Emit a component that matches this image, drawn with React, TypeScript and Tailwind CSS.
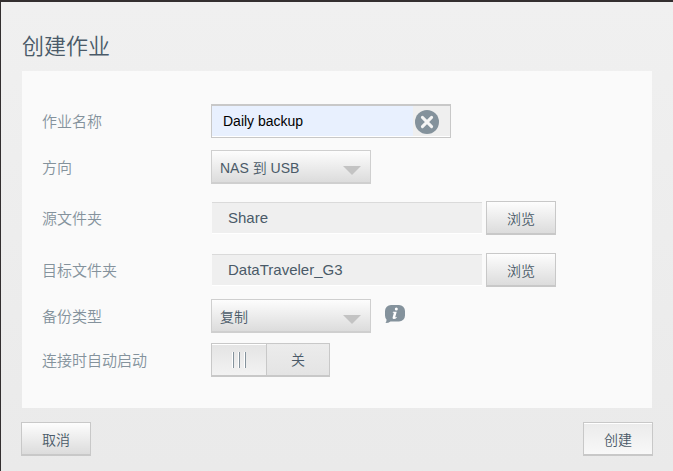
import { useState, type ReactNode } from "react";

interface RowProps {
  id: string;
  label: string;
  className?: string;
  children: ReactNode;
}

const buttonBase =
  "h-[34px] w-[70px] shrink-0 border border-b-2 border-[#c8c8c8] pt-0.5 text-sm text-[#4a5a68]";
const buttonGray = `${buttonBase} bg-linear-to-b from-[#fdfdfd] to-[#dcdcdc]`;
const buttonLight = `${buttonBase} bg-linear-to-b from-[#ebebeb] to-[#f8f8f8] shadow-[inset_0_1px_0_#fff]`;

function Row({ id, label, className = "", children }: RowProps) {
  return (
    <div className={`flex items-center ${className}`}>
      <label htmlFor={id} className="w-[169px] shrink-0 pt-0.5 text-[15px] leading-5 text-[#84929c]">
        {label}
      </label>
      {children}
    </div>
  );
}

function Select({ id, options }: { id: string; options: string[] }) {
  return (
    <div className="relative w-40">
      <select
        id={id}
        className="block h-[34px] w-full appearance-none border border-b-2 border-[#cfcfcf] bg-linear-to-b from-[#fdfdfd] to-[#dcdcdc] pl-2 pr-8 pt-0.5 text-sm text-[#4a5a68] outline-none"
      >
        {options.map((option) => (
          <option key={option}>{option}</option>
        ))}
      </select>
      <svg
        viewBox="0 0 18 9"
        className="pointer-events-none absolute right-[10px] top-4 h-[9px] w-[18px]"
        aria-hidden="true"
      >
        <path d="M0 0h18L9 9z" fill="#c3c3c3" />
      </svg>
    </div>
  );
}

function FolderPicker({ id, value }: { id: string; value: string }) {
  return (
    <div className="flex items-center gap-1">
      <input
        id={id}
        readOnly
        value={value}
        className="ml-px h-8 w-[270px] min-w-0 border-b border-t border-b-white border-t-[#dadada] bg-[#efefef] px-4 pb-0.5 text-[15px] text-[#4a5a68] outline-none"
      />
      <button type="button" className={buttonGray}>
        浏览
      </button>
    </div>
  );
}

export default function App() {
  const [name, setName] = useState("Daily backup");
  const [auto, setAuto] = useState(false);

  return (
    <div className="min-h-screen border-l border-t-2 border-[#332f30] bg-linear-to-b from-[#f0f0f0] to-[#eaeaea] font-['Liberation_Sans','Noto_Sans_CJK_SC',sans-serif] font-[350]">
      <form
        className="px-[21px] pb-3.5 pt-[29px]"
        onSubmit={(e) => e.preventDefault()}
      >
        <h1 className="text-[22px] leading-8 text-[#4a5a68]">创建作业</h1>

        {/* Settings */}
        <div className="mt-2 bg-[#fafafa] px-5 pb-[31px] pt-[33px]">
          <Row id="name" label="作业名称">
            <div className="flex h-[34px] w-60 border border-t-2 border-[#c8c8c8] bg-[#efefef] shadow-[inset_0_-1px_0_#fff]">
              <input
                id="name"
                value={name}
                onChange={(e) => setName(e.target.value)}
                className="mb-px w-[201px] min-w-0 bg-[#e8f0fe] pl-[11px] text-sm text-black outline-none"
              />
              <button type="button" aria-label="清除" className="ml-0.5" onClick={() => setName("")}>
                <svg viewBox="0 0 24 24" className="size-6">
                  <circle cx="12" cy="12" r="12" fill="#84929c" />
                  <path
                    d="M7.4 7.4l9.2 9.2M16.6 7.4l-9.2 9.2"
                    stroke="#f5f5f5"
                    strokeWidth="3"
                    strokeLinecap="round"
                  />
                </svg>
              </button>
            </div>
          </Row>

          <Row id="direction" label="方向" className="mt-3">
            <Select id="direction" options={["NAS 到 USB", "USB 到 NAS"]} />
          </Row>

          <Row id="source" label="源文件夹" className="mt-[17px]">
            <FolderPicker id="source" value="Share" />
          </Row>

          <Row id="target" label="目标文件夹" className="mt-[18px]">
            <FolderPicker id="target" value="DataTraveler_G3" />
          </Row>

          <Row id="type" label="备份类型" className="mt-3">
            <Select id="type" options={["复制", "同步"]} />
            <button type="button" aria-label="说明" className="-mt-1 ml-3.5">
              <svg viewBox="0 0 20 18" className="h-[18px] w-5">
                <path
                  d="M6 0h8a6 6 0 0 1 6 6v4.500a6 6 0 0 1-6 6H5.500Q3.500 18 .5 18Q1.700 16.500 1.500 14.500A6 6 0 0 1 0 10.500V6a6 6 0 0 1 6-6z"
                  fill="#84929c"
                />
                <circle cx="11.300" cy="3.900" r="1.500" fill="#fff" />
                <path
                  d="M8 6.700h3.700L10.200 12.200q.5.200 1.500-.5l.1.800Q10.300 14.200 8.600 14q-1.300-.2-1-1.500L8.900 7.700H7.700z"
                  fill="#fff"
                />
              </svg>
            </button>
          </Row>

          <Row id="auto" label="连接时自动启动" className="mt-2.5">
            <label
              className={`flex h-[34px] w-[119px] cursor-pointer border border-b-2 border-[#c8c8c8] bg-linear-to-b from-[#ececec] to-[#e4e4e4] text-sm text-[#4a5a68] ${
                auto ? "flex-row-reverse" : ""
              }`}
            >
              <input
                id="auto"
                type="checkbox"
                checked={auto}
                onChange={(e) => setAuto(e.target.checked)}
                className="sr-only"
              />
              <span className="flex w-[55px] items-center justify-center border-r border-[#c8c8c8] bg-linear-to-b from-[#e4e4e4] to-[#f2f2f2] shadow-[inset_0_1px_0_#fff]">
                <svg viewBox="0 0 14 16" className="h-4 w-3.5" aria-hidden="true">
                  <path d="M0 0h1v16H0zM6 0h1v16H6zM12 0h1v16h-1z" fill="#fff" />
                  <path d="M1 0h1v16H1zM7 0h1v16H7zM13 0h1v16h-1z" fill="#84929c" />
                </svg>
              </span>
              <span className="flex flex-1 items-center justify-center">
                {auto ? "开" : "关"}
              </span>
            </label>
          </Row>
        </div>

        {/* Actions */}
        <div className="-mx-px mt-3.5 flex justify-between">
          <button type="button" className={buttonGray}>
            取消
          </button>
          <button type="submit" className={buttonLight}>
            创建
          </button>
        </div>
      </form>
    </div>
  );
}
